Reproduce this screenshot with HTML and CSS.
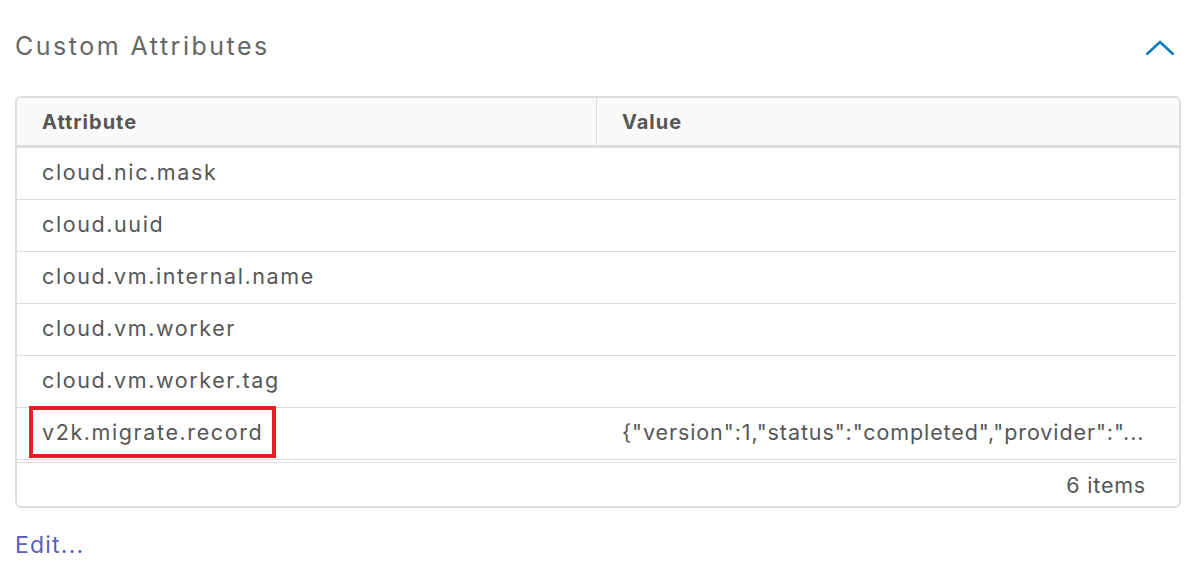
FILE: index.html
```html
<!DOCTYPE html>
<html lang="en">
<head>
<meta charset="utf-8">
<title>Custom Attributes</title>
<link rel="stylesheet" href="styles.css">
</head>
<body>
<section class="panel">
  <header class="panel-head">
    <h2 class="panel-title">Custom Attributes</h2>
    <button class="collapse" aria-label="Collapse">
      <svg width="30" height="16" viewBox="0 0 30 16"><path d="M1.5 14.5 L15 2 L28.5 14.5" fill="none" stroke="#0a7cc1" stroke-width="2.6"/></svg>
    </button>
  </header>
  <div class="grid">
    <div class="grid-head">
      <div class="cell col-attr">Attribute</div>
      <div class="cell col-val">Value</div>
    </div>
    <div class="grid-body">
      <div class="row"><div class="cell col-attr">cloud.nic.mask</div><div class="cell col-val"></div></div>
      <div class="row"><div class="cell col-attr">cloud.uuid</div><div class="cell col-val"></div></div>
      <div class="row"><div class="cell col-attr">cloud.vm.internal.name</div><div class="cell col-val"></div></div>
      <div class="row"><div class="cell col-attr">cloud.vm.worker</div><div class="cell col-val"></div></div>
      <div class="row"><div class="cell col-attr">cloud.vm.worker.tag</div><div class="cell col-val"></div></div>
      <div class="row"><div class="cell col-attr"><span class="highlight">v2k.migrate.record</span></div><div class="cell col-val">{"version":1,"status":"completed","provider":"...</div></div>
    </div>
    <div class="grid-foot">6 items</div>
  </div>
  <a class="edit-link" href="#">Edit...</a>
</section>
</body>
</html>
```

FILE: styles.css
```css
* { box-sizing: border-box; }
html, body { margin: 0; padding: 0; background: #fff; }
body {
  font-family: Inter, "Noto Sans", "Liberation Sans", sans-serif;
  color: #565656;
}
.panel {
  padding: 0 22px 0 15px;
}
.panel-head {
  display: flex;
  align-items: center;
  justify-content: space-between;
  height: 96px;
  padding-bottom: 4px;
}
.panel-title {
  margin: 0;
  font-size: 25px;
  font-weight: 400;
  color: #666;
  letter-spacing: 2.5px;
}
.collapse {
  border: 0;
  background: none;
  padding: 0;
  margin-right: 6px;
  margin-top: 4px;
  display: flex;
}
.grid {
  border: 2px solid #dedede;
  border-radius: 6px;
  overflow: hidden;
}
.grid-head {
  display: flex;
  background: #fafafa;
  border-bottom: 3px solid #dcdcdc;
  height: 50px;
  font-size: 20px;
  font-weight: 700;
  color: #565656;
  letter-spacing: 1px;
}
.grid-head .cell { display: flex; align-items: center; }
.grid-head .col-attr { border-right: 1px solid #dcdcdc; }
.cell { padding-left: 25px; }
.col-attr { width: 580px; flex: none; }
.col-val { flex: 1; min-width: 0; white-space: nowrap; }
.grid-body { border-bottom: 1px solid #dcdcdc; margin-right: 2px; padding-bottom: 2px; }
.row {
  display: flex;
  height: 52px;
  padding-bottom: 3px;
  border-bottom: 1px solid #dcdcdc;
  font-size: 21.5px;
  align-items: center;
}
.row .col-attr { letter-spacing: 1.6px; }
.row .col-val { letter-spacing: 0.9px; }
.highlight {
  display: inline-block;
  position: relative;
}
.highlight::before {
  content: "";
  position: absolute;
  left: -13px;
  right: -13px;
  top: -13px;
  bottom: -13px;
  border: 4px solid #ea1c26;
}
.grid-foot {
  height: 43px;
  display: flex;
  align-items: center;
  justify-content: flex-end;
  padding-right: 33px;
  font-size: 21.5px;
  letter-spacing: 0.8px;
}
.edit-link {
  display: inline-block;
  margin-top: 23px;
  font-size: 23px;
  letter-spacing: 1.2px;
  color: #5b5fc0;
  text-decoration: none;
}
```
